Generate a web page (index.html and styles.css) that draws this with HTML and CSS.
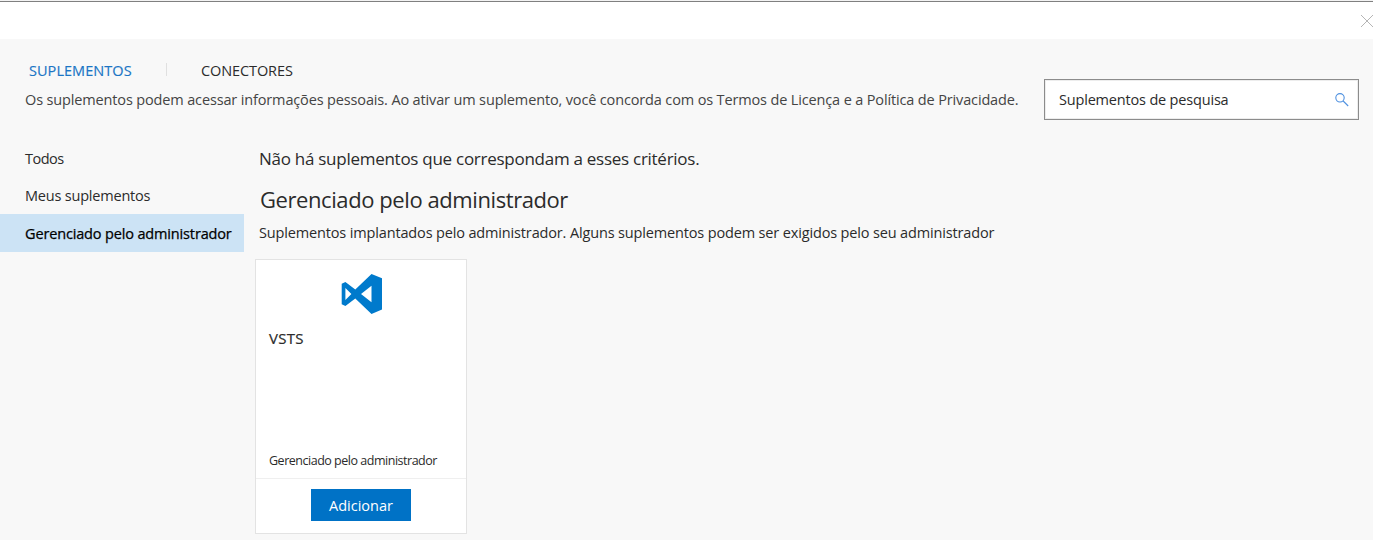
FILE: index.html
```html
<!DOCTYPE html>
<html lang="pt-BR">
<head>
<meta charset="utf-8">
<title>Suplementos</title>
<link rel="stylesheet" href="styles.css">
</head>
<body>
<header class="titlebar">
  <svg class="close" width="13" height="14" viewBox="0 0 13 14"><path d="M1 1L13 13M13 1L1 13" fill="none" stroke="#b5b5b5"/></svg>
</header>
<section class="top">
  <div class="intro">
    <nav class="tabs">
      <span class="tab active">SUPLEMENTOS</span>
      <span class="divider"></span>
      <span class="tab connectors">CONECTORES</span>
    </nav>
    <p class="notice">Os suplementos podem acessar informações pessoais. Ao ativar um suplemento, você concorda com os Termos de Licença e a Política de Privacidade.</p>
  </div>
  <div class="search">
    <span class="search-text">Suplementos de pesquisa</span>
    <svg width="15" height="15" viewBox="0 0 15 15"><circle cx="6" cy="5.800" r="4.200"/><path d="M9.200 9L14.200 14"/></svg>
  </div>
</section>
<main class="main">
  <aside class="sidebar">
    <div class="item all">Todos</div>
    <div class="item mine">Meus suplementos</div>
    <div class="item selected">Gerenciado pelo administrador</div>
  </aside>
  <section class="content">
    <p class="empty">Não há suplementos que correspondam a esses critérios.</p>
    <h1 class="heading">Gerenciado pelo administrador</h1>
    <p class="sub">Suplementos implantados pelo administrador. Alguns suplementos podem ser exigidos pelo seu administrador</p>
    <article class="card">
      <svg class="logo" width="42" height="42" viewBox="0 0 42 42"><path fill-rule="evenodd" d="M30.500 1L41 5.200V36.500L30.500 41L14.300 25.500L4.400 33L0.700 31.200V10.800L4.400 9L14.300 16.500ZM30.500 12.700L20 21L30.500 29.300ZM4.400 15V27L10.400 21Z"/></svg>
      <h2 class="name">VSTS</h2>
      <p class="managed">Gerenciado pelo administrador</p>
      <footer class="card-footer"><button class="add">Adicionar</button></footer>
    </article>
  </section>
</main>
</body>
</html>
```
FILE: styles.css
```css
* { box-sizing: border-box; }
body {
  margin: 0;
  height: 540px;
  overflow: hidden;
  background: #f8f8f8;
  color: #2b2b2b;
  font: 14.5px/20px "Open Sans", "Noto Sans", sans-serif;
  letter-spacing: -0.15px;
  white-space: nowrap;
}
p, h1, h2 { margin: 0; font-weight: 400; }
.titlebar {
  height: 39px;
  padding-top: 14px;
  display: flex;
  justify-content: flex-end;
  background: linear-gradient(#f3f3f3 1px, #808080 1px, #808080 2px, #fff 2px);
}
.close { display: block; }
.top { height: 100px; display: flex; }
.intro { width: 1044px; padding: 22px 0 0 25px; }
.tabs { display: flex; height: 20px; padding-left: 4px; }
.tab.active { width: 137px; color: #1b75c5; letter-spacing: 0.05px; -webkit-text-stroke: 0.15px #1b75c5; }
.divider { width: 1px; height: 13px; margin-top: 2px; background: #e0e0e0; }
.connectors { margin-left: 34px; letter-spacing: -0.1px; }
.notice { margin-top: 9px; color: #444; letter-spacing: -0.145px; }
.search {
  width: 315px;
  height: 41px;
  margin-top: 40px;
  padding: 0 9px 0 14px;
  display: flex;
  align-items: center;
  justify-content: space-between;
  background: #fff;
  border: 1px solid #8c8c8c;
  box-shadow: inset 0 0 0 1px #ededed;
}
.search-text { letter-spacing: -0.18px; }
.search svg { fill: none; stroke: #4f91e0; stroke-width: 1.1; }
.main { display: flex; }
.sidebar { width: 244px; }
.item { height: 37px; padding: 10px 0 0 25px; letter-spacing: -0.2px; }
.item.all { letter-spacing: -0.5px; }
.item.mine { height: 38px; }
.item.selected { height: 38px; background: #cce3f5; color: #000; letter-spacing: -0.15px; -webkit-text-stroke: 0.25px #000; }
.content { padding: 8px 0 0 15px; }
.empty { font-size: 17px; line-height: 24px; letter-spacing: -0.27px; }
.heading { margin: 12px 0 0 1px; font-size: 22px; line-height: 32px; letter-spacing: -0.42px; }
.sub { margin-top: 8px; }
.card {
  width: 212px;
  height: 275px;
  margin: 16px 0 0 -4px;
  display: flex;
  flex-direction: column;
  background: #fff;
  border: 1px solid #e3e3e3;
}
.logo { display: block; margin: 13px 0 0 85px; fill: #007acc; }
.name { margin: 13px 0 0 13px; font-size: 15px; line-height: 20px; letter-spacing: 0.3px; -webkit-text-stroke: 0.2px #2b2b2b; }
.managed { margin: 104px 0 0 13px; font-size: 12.5px; line-height: 18px; letter-spacing: -0.48px; }
.card-footer { margin-top: 8px; padding-top: 10px; border-top: 1px solid #efefef; }
.add {
  display: block;
  width: 100px;
  height: 32px;
  margin-left: 55px;
  padding: 1px 0 0;
  border: 0;
  background: #0072c6;
  color: #fff;
  font: inherit;
  letter-spacing: 0;
}
```
